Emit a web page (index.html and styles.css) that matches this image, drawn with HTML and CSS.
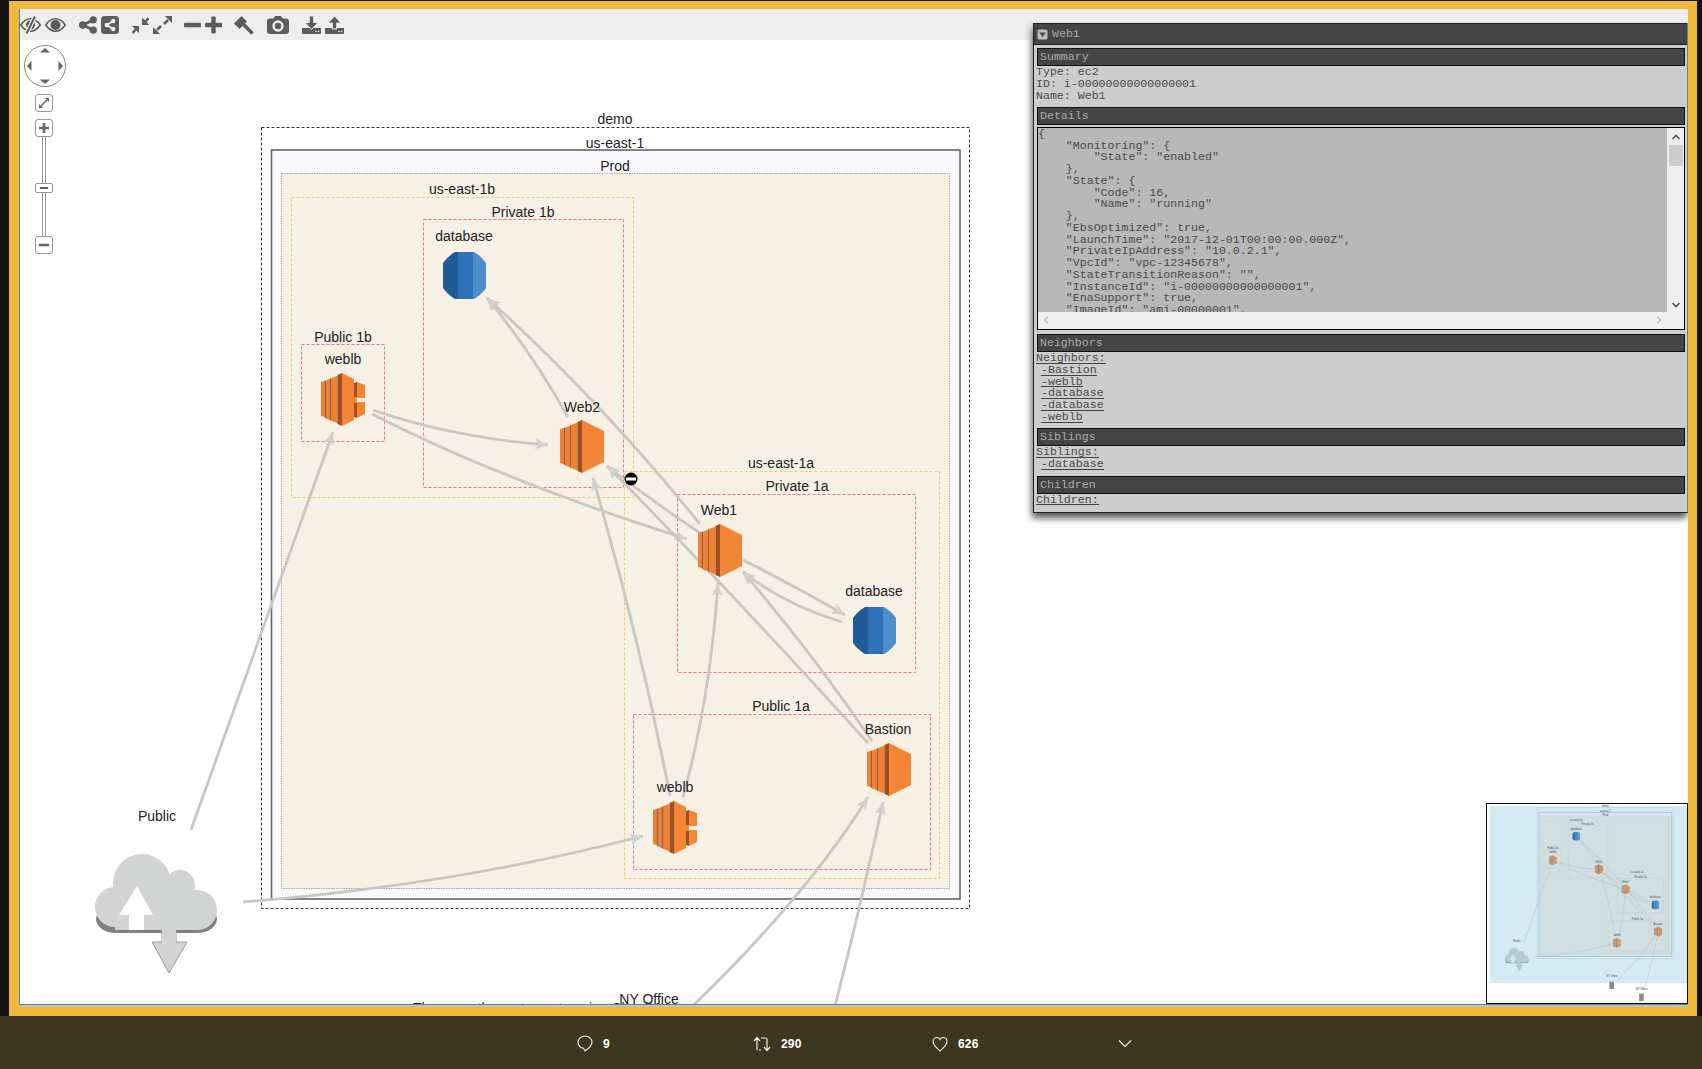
FILE: index.html
```html
<!DOCTYPE html>
<html lang="en">
<head>
  <meta charset="UTF-8">
  <title>CloudMapper</title>
  <link rel="stylesheet" href="styles.css">
</head>
<body>
  <div class="shot">
    <div class="viewer">

      <!-- toolbar -->
      <div class="toolbar">
        <div class="tool-group">
          <svg width="21" height="20" viewBox="0 0 21 20"><path class="ln" d="M.8 10C4 5 8 3.8 10.5 3.8S17 5 20.2 10C17 15 13 16.2 10.5 16.2S4 15 .8 10Z"/><circle class="fl" cx="10.5" cy="10" r="4.5"/><path d="M15 1.5L6.5 18.5" stroke="#eee" stroke-width="4.5"/><path d="M15 1.5L6.5 18.5" stroke="#5c5c5c" stroke-width="2"/></svg>
          <svg width="21" height="20" viewBox="0 0 21 20"><path class="ln" d="M.8 10C4 5 8 3.8 10.5 3.8S17 5 20.2 10C17 15 13 16.2 10.5 16.2S4 15 .8 10Z"/><circle class="fl" cx="10.5" cy="10" r="5"/></svg>
        </div>
        <div class="tool-group">
          <svg width="18" height="20" viewBox="0 0 18 20"><path d="M14 5L4 10L14 15" fill="none" stroke="#5c5c5c" stroke-width="2.8"/><circle class="fl" cx="14.3" cy="4.8" r="3.6"/><circle class="fl" cx="3.7" cy="10" r="3.7"/><circle class="fl" cx="14.3" cy="15.2" r="3.6"/></svg>
          <svg width="18" height="20" viewBox="0 0 18 20"><rect class="fl" x="0" y="1" width="18" height="18" rx="3.5"/><path d="M12 6L6 10L12 14" fill="none" stroke="#eee" stroke-width="1.8"/><circle cx="12.2" cy="6" r="2.2" fill="#eee"/><circle cx="5.8" cy="10" r="2.2" fill="#eee"/><circle cx="12.2" cy="14" r="2.2" fill="#eee"/></svg>
        </div>
        <div class="tool-group">
          <svg width="17" height="20" viewBox="0 0 17 20"><path class="fl" d="M10 2.5V10H17.5Z"/><path d="M13 7L16.5 3" stroke="#5c5c5c" stroke-width="2.5"/><path class="fl" d="M7 11H0L7 18Z"/><path d="M3.5 14.5L.8 18" stroke="#5c5c5c" stroke-width="2.5"/></svg>
          <svg width="19" height="20" viewBox="0 0 19 20"><path class="fl" d="M19 1H12L19 8Z"/><path d="M15 5L11 9" stroke="#5c5c5c" stroke-width="2.5"/><path class="fl" d="M0 19H7L0 12Z"/><path d="M4 15L8 11" stroke="#5c5c5c" stroke-width="2.5"/></svg>
        </div>
        <div class="tool-group tool-tight">
          <svg width="17" height="20" viewBox="0 0 17 20"><rect class="fl" x="0" y="7.8" width="17" height="4.4" rx="1"/></svg>
          <svg width="17" height="20" viewBox="0 0 17 20"><rect class="fl" x="0" y="7.8" width="17" height="4.4" rx="1"/><rect class="fl" x="6.3" y="1.5" width="4.4" height="17" rx="1"/></svg>
        </div>
        <svg width="20" height="20" viewBox="0 0 20 20"><path class="fl" d="M0 8.5L7.5 1L13 6.5L5.5 14Z"/><path d="M9 9L18.5 18.5" stroke="#5c5c5c" stroke-width="3.6"/></svg>
        <svg width="22" height="20" viewBox="0 0 22 20"><path class="fl" d="M3 3.5H6.5L8 1H14L15.5 3.5H19Q22 3.5 22 6.5V16Q22 19 19 19H3Q0 19 0 16V6.5Q0 3.5 3 3.5Z"/><circle cx="11" cy="11" r="5.7" fill="#eee"/><circle class="fl" cx="11" cy="11" r="3.2"/></svg>
        <div class="tool-group">
          <svg width="19" height="20" viewBox="0 0 19 20"><path class="fl" d="M0 13H19V18Q19 19 18 19H1Q0 19 0 18Z"/><path class="fl" d="M7.3 1H11.7V7.5H16L9.5 14.5L3 7.5H7.3Z" stroke="#eee" stroke-width="1"/><circle cx="14" cy="16.5" r=".8" fill="#eee"/><circle cx="16.5" cy="16.5" r=".8" fill="#eee"/></svg>
          <svg width="19" height="20" viewBox="0 0 19 20"><path class="fl" d="M0 13H19V18Q19 19 18 19H1Q0 19 0 18Z"/><path class="fl" d="M7.3 14H11.7V8H16L9.5 1L3 8H7.3Z" stroke="#eee" stroke-width="1"/><circle cx="14" cy="16.5" r=".8" fill="#eee"/><circle cx="16.5" cy="16.5" r=".8" fill="#eee"/></svg>
        </div>
        <div class="crumbs">
          <a>demo</a> &gt; <a>us-east-1</a> &gt; <a>Prod</a> &gt; <a>us-east-1a</a> &gt; <a>Private 1a</a>
        </div>
      </div>

      <!-- the diagram -->
      <svg class="canvas" viewBox="20 40 1668 964">
        <defs>
          <marker id="arrow" markerUnits="userSpaceOnUse" markerWidth="14" markerHeight="11" refX="13" refY="5.500" orient="auto">
            <path d="M0 0L13 5.500L0 11L3 5.500Z" fill="#d3d1ce"/>
          </marker>
          <clipPath id="db-clip"><path d="M12 0H31Q38 4 43 11V36Q38 43 31 47H12Q5 43 0 36V11Q5 4 12 0Z"/></clipPath>
          <symbol id="ec2" viewBox="0 0 44 53" width="44" height="53">
            <path fill="#f08033" d="M0 9L3.500 8V44L0 43ZM5 7.500L9.500 6V47L5 45.500ZM11 5L17.500 2.500V50.500L11 48Z"/>
            <path fill="#a5582a" d="M3.500 8L5 7.500V45.500L3.500 44ZM9.500 6L11 5V48L9.500 47Z"/>
            <path fill="#9d5125" d="M17.500 2L22 0V53L17.500 51Z"/>
            <path fill="#f58536" d="M22 0L44 11V42L22 53Z"/>
          </symbol>
          <symbol id="elb" viewBox="0 0 44 53" width="44" height="53">
            <path fill="#f08033" d="M0 9L3.500 8V44L0 43ZM5 7.500L8.500 6V47L5 45.500ZM10.500 5L16.500 2.800V50.200L10.500 48Z"/>
            <path fill="#a5582a" d="M3.500 8L5 7.500V45.500L3.500 44ZM8.500 6L10.500 5V48L8.500 47Z"/>
            <path fill="#9d5125" d="M16.500 2L21 0V53L16.500 51ZM33 10L36 9V25H33ZM33 29H36V45L33 44Z"/>
            <path fill="#f58536" d="M21 0L33 6V25H21ZM21 30H33V47L21 53ZM36 9L44 12V25H36ZM36 29H44V41L36 45Z"/>
            <path fill="#f58536" d="M21 24H36V30H21Z"/>
          </symbol>
          <symbol id="rds" viewBox="0 0 43 47" width="43" height="47">
            <g clip-path="url(#db-clip)">
              <rect width="15" height="47" fill="#205b97"/>
              <rect x="15" width="15" height="47" fill="#2e73b8"/>
              <rect x="30" width="13" height="47" fill="#4d8ecb"/>
            </g>
          </symbol>
        </defs>

        <text class="behind" x="413" y="1013">There are three stages to using CloudMapper.</text>

        <g id="graph">
          <rect class="grp-demo" x="261.500" y="127.500" width="708" height="781"/>
          <rect class="grp-region" x="271.500" y="150" width="688.500" height="749"/>
          <rect class="grp-vpc" x="281.500" y="173.500" width="668" height="715"/>
          <rect class="grp-az" x="291.500" y="197.500" width="342" height="300"/>
          <rect class="grp-az" x="624.500" y="471.500" width="315" height="407"/>
          <rect class="grp-subnet" x="423.500" y="219.500" width="200" height="268"/>
          <rect class="grp-subnet" x="301.500" y="344.500" width="83" height="97"/>
          <rect class="grp-subnet" x="677.500" y="494.500" width="238" height="178"/>
          <rect class="grp-subnet" x="633.500" y="714.500" width="297" height="155"/>

          <g class="edges">
            <path d="M191 830Q262 630 333 432"/>
            <path d="M243 902Q455 885 643 836"/>
            <path d="M373 410Q450 437 548 445"/>
            <path d="M372 414Q500 480 687 539"/>
            <path d="M568 417Q530 350 487 298"/>
            <path d="M700 524Q600 400 487 298"/>
            <path d="M700 533Q655 503 607 466"/>
            <path d="M868 743Q720 580 607 466"/>
            <path d="M743 560Q795 586 845 615"/>
            <path d="M842 622Q785 605 743 572"/>
            <path d="M872 741Q810 650 743 572"/>
            <path d="M683 797Q710 700 718 583"/>
            <path d="M670 796Q640 640 593 478"/>
            <path d="M675 1023Q805 900 868 797"/>
            <path d="M822 1056Q858 920 883 802"/>
          </g>

          <use href="#elb" x="321" y="373"/>
          <use href="#ec2" x="560" y="420"/>
          <use href="#rds" x="443" y="252"/>
          <use href="#ec2" x="698" y="524"/>
          <use href="#rds" x="853" y="607"/>
          <use href="#ec2" x="867" y="743"/>
          <use href="#elb" x="653" y="801"/>

          <!-- Public cloud -->
          <rect x="96" y="905" width="121" height="28" rx="20" fill="#808080"/>
          <path d="M162 930H176V942H187L169 973L152 942H162Z" fill="#d2d3d3" stroke="#9a9a9a"/>
          <g fill="#d2d3d3">
            <circle cx="115" cy="907" r="20"/>
            <circle cx="142" cy="883" r="29"/>
            <circle cx="180" cy="885" r="15"/>
            <circle cx="197" cy="910" r="20"/>
            <rect x="115" y="890" width="82" height="40"/>
          </g>
          <rect x="162" y="928" width="14" height="14" fill="#d2d3d3"/>
          <path d="M137 886L153 915H144V930H129V915H119Z" fill="#fff"/>

          <rect x="636" y="1028" width="24" height="38" rx="2" fill="#8b8b8b"/>
          <rect x="790" y="1090" width="24" height="38" rx="2" fill="#8b8b8b"/>

          <g class="labels">
            <text x="615" y="124">demo</text>
            <text x="615" y="148">us-east-1</text>
            <text x="615" y="171">Prod</text>
            <text x="462" y="194">us-east-1b</text>
            <text x="523" y="217">Private 1b</text>
            <text x="464" y="241">database</text>
            <text x="343" y="342">Public 1b</text>
            <text x="343" y="364">weblb</text>
            <text x="582" y="412">Web2</text>
            <text x="781" y="468">us-east-1a</text>
            <text x="797" y="491">Private 1a</text>
            <text x="719" y="515">Web1</text>
            <text x="874" y="596">database</text>
            <text x="781" y="711">Public 1a</text>
            <text x="888" y="734">Bastion</text>
            <text x="675" y="792">weblb</text>
            <text x="157" y="821">Public</text>
            <text x="649" y="1004">NY Office</text>
            <text x="802" y="1070">NY Office</text>
          </g>
        </g>

        <!-- node action marker, not part of the minimap -->
        <circle cx="631" cy="479" r="6.500"/>
        <rect x="626" y="477.500" width="10" height="3" fill="#fff"/>
      </svg>

      <!-- pan and zoom -->
      <div class="nav">
        <svg class="nav-pad" width="44" height="44" viewBox="0 0 44 44">
          <circle cx="22" cy="22" r="20.500" fill="#fff" stroke="#888"/>
          <path d="M22 4L27 8.500H17ZM22 40L17 35.500H27ZM4 22L8.500 17V27ZM40 22L35.500 27V17Z" fill="#666"/>
        </svg>
        <button class="nav-btn">
          <svg width="12" height="12" viewBox="0 0 12 12"><path d="M11 1H7L11 5ZM1 11H5L1 7Z" fill="#666"/><path d="M9 3L3 9" stroke="#666" stroke-width="1.500"/></svg>
        </button>
        <button class="nav-btn">
          <svg width="12" height="12" viewBox="0 0 12 12"><path d="M1 6H11M6 1V11" stroke="#666" stroke-width="2.600"/></svg>
        </button>
        <div class="nav-track"><span class="nav-handle"></span></div>
        <button class="nav-btn">
          <svg width="12" height="12" viewBox="0 0 12 12"><path d="M1 6H11" stroke="#666" stroke-width="2.600"/></svg>
        </button>
      </div>

      <!-- node details -->
      <div class="panel">
        <div class="panel-title">
          <svg width="11" height="11" viewBox="0 0 11 11"><rect x=".5" y=".5" width="10" height="10" rx="1.500" fill="#bbb"/><path d="M2.500 3.500H8.500L5.500 8Z" fill="#444"/></svg>
          Web1
        </div>
        <div class="panel-body">
          <h3 class="bar">Summary</h3>
          <div class="info">Type: ec2<br>ID: i-00000000000000001<br>Name: Web1</div>
          <h3 class="bar">Details</h3>
          <div class="json-box">
            <pre class="json">{
    "Monitoring": {
        "State": "enabled"
    },
    "State": {
        "Code": 16,
        "Name": "running"
    },
    "EbsOptimized": true,
    "LaunchTime": "2017-12-01T00:00:00.000Z",
    "PrivateIpAddress": "10.0.2.1",
    "VpcId": "vpc-12345678",
    "StateTransitionReason": "",
    "InstanceId": "i-00000000000000001",
    "EnaSupport": true,
    "ImageId": "ami-00000001",</pre>
            <div class="vscroll">
              <svg width="10" height="8" viewBox="0 0 10 8"><path d="M1.500 6L5 2.500L8.500 6" fill="none" stroke="#555" stroke-width="1.600"/></svg>
              <span class="vthumb"></span>
              <svg class="vdown" width="10" height="8" viewBox="0 0 10 8"><path d="M1.500 2L5 5.500L8.500 2" fill="none" stroke="#555" stroke-width="1.600"/></svg>
            </div>
            <div class="hscroll">
              <svg width="8" height="10" viewBox="0 0 8 10"><path d="M6 1.500L2.500 5L6 8.500" fill="none" stroke="#bbb" stroke-width="1.400"/></svg>
              <svg width="8" height="10" viewBox="0 0 8 10"><path d="M2 1.500L5.500 5L2 8.500" fill="none" stroke="#bbb" stroke-width="1.400"/></svg>
            </div>
          </div>
          <h3 class="bar bar-gap">Neighbors</h3>
          <div class="info">
            <div><a>Neighbors:</a></div>
            <div class="sub"><a>-Bastion</a></div>
            <div class="sub"><a>-weblb</a></div>
            <div class="sub"><a>-database</a></div>
            <div class="sub"><a>-database</a></div>
            <div class="sub"><a>-weblb</a></div>
          </div>
          <h3 class="bar">Siblings</h3>
          <div class="info">
            <div><a>Siblings:</a></div>
            <div class="sub"><a>-database</a></div>
          </div>
          <h3 class="bar">Children</h3>
          <div class="info">
            <div><a>Children:</a></div>
          </div>
        </div>
      </div>

      <!-- minimap -->
      <svg class="minimap" viewBox="2 108 1036 1031">
        <use href="#graph"/>
        <rect class="minimap-tint" x="17" y="118" width="1030" height="918"/>
      </svg>
    </div>
  </div>

  <div class="tweet-bar">
    <div class="stat">
      <svg width="16" height="17" viewBox="0 0 16 17"><path d="M8 1C4 1 1 3.800 1 7.300C1 10.500 3.500 13 6.500 13.300L8 16C11 14 15 11 15 7.300C15 3.800 12 1 8 1Z" fill="none" stroke="#eee" stroke-width="1.100"/></svg>
      <span>9</span>
    </div>
    <div class="stat">
      <svg width="18" height="16" viewBox="0 0 18 16"><path d="M4 14V2M1 5L4 1.500L7 5M8 2H12Q14 2 14 4V14M11 11L14 14.500L17 11M8 14H6" fill="none" stroke="#eee" stroke-width="1.200"/></svg>
      <span>290</span>
    </div>
    <div class="stat">
      <svg width="16" height="16" viewBox="0 0 16 16"><path d="M8 15C4 11.500 1 9 1 5.500C1 3 2.800 1.500 4.800 1.500C6.200 1.500 7.400 2.300 8 3.500C8.600 2.300 9.800 1.500 11.200 1.500C13.200 1.500 15 3 15 5.500C15 9 12 11.500 8 15Z" fill="none" stroke="#eee" stroke-width="1.100"/></svg>
      <span>626</span>
    </div>
    <svg width="14" height="9" viewBox="0 0 14 9"><path d="M1 1.500L7 7.500L13 1.500" fill="none" stroke="#eee" stroke-width="1.200"/></svg>
  </div>
</body>
</html>
```

FILE: styles.css
```css
html, body {
  margin: 0;
  padding: 0;
  height: 1069px;
  overflow: hidden;
  background-color: #121212;
}

.shot {
  margin: 1px 5px 0 9px;
  padding: 8px 9px 11px 10px;
  background-color: #f0b83a;
}
.viewer {
  position: relative;
  display: flex;
  flex-direction: column;
  height: 996px;
  background-color: #fff;
  border-left: 1px solid #3c8dc0;
  border-bottom: 1px solid #3c8dc0;
  box-shadow: 0 2px 0 #c9c3a8;
  box-sizing: border-box;
  overflow: hidden;
}

/* toolbar */
.toolbar {
  display: flex;
  align-items: center;
  gap: 13px;
  flex: none;
  height: 31px;
  background-color: #eee;
}
.tool-group {
  display: flex;
  gap: 4px;
}
.tool-tight {
  margin: 0 -1px;
}
.toolbar svg {
  display: block;
}
.fl {
  fill: #5c5c5c;
}
.ln {
  fill: none;
  stroke: #5c5c5c;
  stroke-width: 1.6;
}
.crumbs {
  margin-left: auto;
  align-self: flex-start;
  padding: 0 6px 0 0;
  font: 11.6px/14px "Liberation Mono", monospace;
  color: #555;
  white-space: pre;
}
.crumbs a {
  border-bottom: 1px solid #555;
}

/* diagram */
.canvas {
  display: block;
  flex: none;
  width: 1668px;
  height: 964px;
}
.behind {
  font: 14px "Liberation Sans", sans-serif;
  fill: #222;
}
.labels text {
  font: 14px "Liberation Sans", Arial, sans-serif;
  fill: #222;
  text-anchor: middle;
}
.edges path {
  fill: none;
  stroke: #cac7c1;
  stroke-width: 2.8;
  marker-end: url(#arrow);
}
.grp-demo {
  fill: #fff;
  stroke: #333;
  stroke-dasharray: 3 2;
}
.grp-region {
  fill: #f9f9fd;
  stroke: #666;
  stroke-width: 1.6;
}
.grp-vpc {
  fill: #f7f0e4;
  stroke: #a8a8a8;
  stroke-dasharray: 1.5 1;
}
.grp-az {
  fill: none;
  stroke: #f2c67c;
  stroke-dasharray: 3 2;
}
.grp-subnet {
  fill: none;
  stroke: #e8738a;
  stroke-dasharray: 3 2;
}

/* pan and zoom */
.nav {
  position: absolute;
  left: 15px;
  top: 36px;
  display: flex;
  flex-direction: column;
  width: 18px;
}
.nav-pad {
  display: block;
  margin: -1px 0 6px -12px;
}
.nav-btn {
  display: flex;
  align-items: center;
  justify-content: center;
  width: 18px;
  height: 18px;
  margin: 0 0 7px;
  padding: 0;
  background-color: #fff;
  border: 1px solid #999;
  border-radius: 3px;
}
.nav-btn + .nav-track {
  margin-top: -7px;
}
.nav-track {
  position: relative;
  width: 4px;
  height: 99px;
  margin-left: 7px;
  background-color: #fff;
  border-left: 1px solid #999;
  border-right: 1px solid #999;
  box-sizing: border-box;
}
.nav-handle {
  position: absolute;
  left: -8px;
  top: 46px;
  width: 16px;
  height: 8px;
  background-color: #fff;
  border: 1px solid #999;
  border-radius: 2px;
}
.nav-handle::after {
  content: "";
  position: absolute;
  left: 4px;
  top: 3px;
  width: 8px;
  height: 2px;
  background-color: #666;
}

/* node details */
.panel {
  position: absolute;
  right: 0;
  top: 14px;
  width: 655px;
  box-sizing: border-box;
  background-color: #cdcdcd;
  border: 1px solid #222;
  border-top: none;
  border-right-color: #3c8dc0;
  box-shadow: -1px 5px 7px #555;
  font: 11.6px/11.8px "Liberation Mono", "Courier New", monospace;
  color: #4a4a4a;
}
.panel-title {
  display: flex;
  align-items: center;
  gap: 4px;
  height: 22px;
  padding-left: 3px;
  box-sizing: border-box;
  background-color: #444;
  border-top: 1px solid #222;
  border-bottom: 1px solid #222;
  color: #aaa;
}
.panel-body {
  padding: 3px 2px 1px 3px;
}
.bar {
  height: 18px;
  margin: 0;
  padding-left: 2px;
  box-sizing: border-box;
  background-color: #444;
  border: 1px solid #111;
  font: inherit;
  line-height: 16px;
  color: #aaa;
}
.info {
  margin-left: -1px;
  padding-bottom: 5.6px;
}
.info a {
  display: inline-block;
  height: 10.8px;
  border-bottom: 1px solid #444;
}
.sub {
  padding-left: 5px;
}
.bar-gap {
  margin-top: 4px;
}

.json-box {
  display: grid;
  grid-template-columns: 1fr 17px;
  grid-template-rows: 184px 17px;
  margin-top: 2px;
  border: 1px solid #000;
}
.json {
  margin: 0;
  padding: 0;
  overflow: hidden;
  background-color: #b8b8b8;
  font: inherit;
  line-height: 11.73px;
  color: #4a4a4a;
}
.vscroll {
  display: flex;
  flex-direction: column;
  align-items: center;
  padding-top: 5px;
  box-sizing: border-box;
  background-color: #eee;
}
.vthumb {
  width: 14px;
  height: 21px;
  margin-top: 4px;
  background-color: #ccc;
}
.vdown {
  margin-top: auto;
  margin-bottom: 3px;
}
.hscroll {
  grid-column: 1 / 3;
  display: flex;
  justify-content: space-between;
  align-items: center;
  padding: 0 21px 0 4px;
  background-color: #eee;
}

/* minimap */
.minimap {
  position: absolute;
  right: 0;
  bottom: 0;
  width: 202px;
  height: 201px;
  box-sizing: border-box;
  background-color: #fff;
  border: 1px solid #111;
}
.minimap-tint {
  fill: rgb(118, 185, 218);
  opacity: 0.3;
}

/* bottom strip */
.tweet-bar {
  display: grid;
  grid-template-columns: 176px 179px 186px auto;
  align-items: center;
  height: 53px;
  padding: 2px 0 0 577px;
  box-sizing: border-box;
  background-color: #3e3620;
}
.stat {
  display: flex;
  align-items: center;
  gap: 10px;
  font: bold 12px "Liberation Sans", Arial, sans-serif;
  letter-spacing: 0.2px;
  color: #fff;
}
```
